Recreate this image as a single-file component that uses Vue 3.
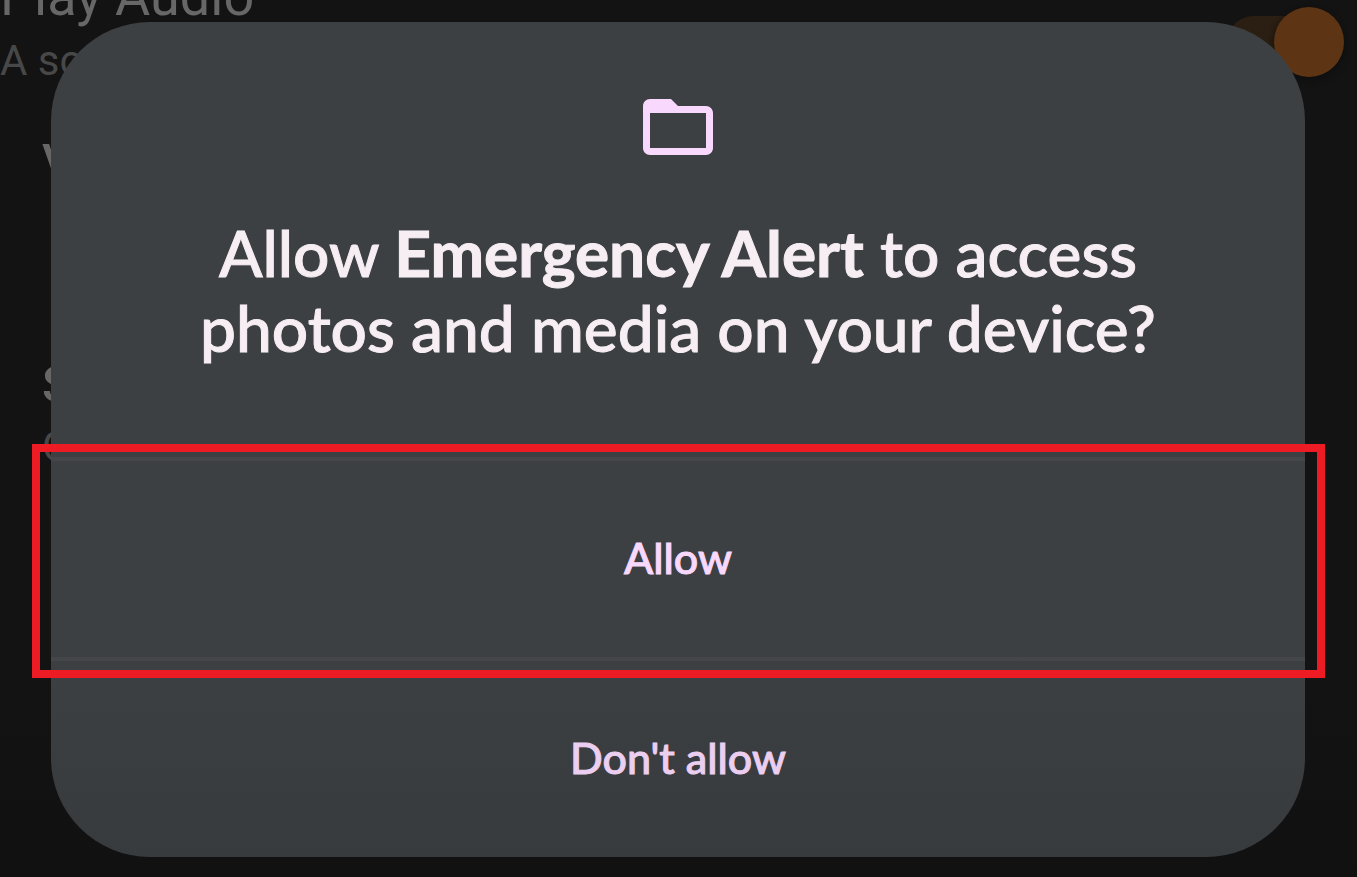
<script setup>
import { ref } from 'vue'

const playAudio = ref(true)
const emit = defineEmits(['allow', 'deny'])
</script>

<template>
  <div class="screen">
    <div class="settings">
      <div class="setting">
        <label class="setting-text" for="play-audio">
          <span class="title">Play Audio</span>
          <span class="summary">A so</span>
        </label>
        <input id="play-audio" v-model="playAudio" class="switch" type="checkbox" role="switch">
      </div>
      <div class="setting inset volume"><span class="name">V</span></div>
      <div class="setting inset sound">
        <span class="name">S</span>
        <span class="summary">C</span>
      </div>
    </div>

    <main class="dialog" role="dialog" aria-labelledby="dialog-title">
      <header class="prompt">
        <svg class="folder" viewBox="0 0 24 24" aria-hidden="true">
          <path d="M20 6h-8l-2-2H4c-1.1 0-1.99.9-1.99 2L2 18c0 1.1.9 2 2 2h16c1.1 0 2-.9 2-2V8c0-1.1-.9-2-2-2zm0 12H4V8h16v10z" />
        </svg>
        <h1 id="dialog-title">Allow <b>Emergency Alert</b> to access<br>photos and media on your device?</h1>
      </header>
      <div class="choice highlighted">
        <button type="button" @click="emit('allow')">Allow</button>
      </div>
      <div class="choice deny">
        <button type="button" @click="emit('deny')">Don't allow</button>
      </div>
    </main>
  </div>
</template>

<style>
body {
  margin: 0;
  background: #131313;
}
</style>

<style scoped>
.screen {
  box-sizing: border-box;
  display: grid;
  min-height: 100vh;
  overflow: hidden;
  background: linear-gradient(#131313 75%, #111);
}

.settings,
.dialog {
  grid-area: 1 / 1;
}

.settings {
  height: 0;
  font-family: Roboto, sans-serif;
  color: #676767;
}

.setting {
  display: flex;
  justify-content: space-between;
  align-items: flex-start;
}

.setting-text {
  display: flex;
  flex-direction: column;
  margin-top: -35px;
}

.title {
  font-size: 54px;
  line-height: 64px;
}

.summary {
  font-size: 42px;
  line-height: 64px;
  color: #484848;
}

.switch {
  appearance: none;
  flex: none;
  width: 112px;
  height: 50px;
  margin: 16px 17px 0 0;
  border-radius: 25px;
  background: #2b1e12;
}

.switch::before {
  content: "";
  display: block;
  width: 70px;
  height: 70px;
  margin: -9px 0 0 46px;
  border-radius: 50%;
  background: #5e3514;
  box-shadow: 0 3px 6px #0e0e0e;
}

.inset {
  flex-direction: column;
  padding-left: 42px;
}

.name {
  font-size: 50px;
  font-weight: 500;
  line-height: 60px;
}

.volume {
  padding-top: 40px;
}

.sound {
  padding-top: 162px;
}

.dialog {
  position: relative;
  align-self: start;
  margin: 22px 52px 20px 51px;
  border-radius: 99px;
  background: linear-gradient(#3c4043 75%, #383b3e);
  font-family: Lato, sans-serif;
}

.prompt {
  display: flex;
  flex-direction: column;
  align-items: center;
  padding: 63px 24px 92px;
}

.folder {
  width: 84px;
  height: 84px;
  fill: #f9d8fd;
}

h1 {
  margin: 46px 0 0;
  color: #f7eef4;
  font-size: 64px;
  font-weight: 500;
  line-height: 75px;
  text-align: center;
  -webkit-text-stroke: 1px currentColor;
}

h1 b {
  font-weight: 700;
}

.choice {
  position: relative;
  border-top: 4px solid #454649;
}

.choice button {
  display: block;
  width: 100%;
  height: 196px;
  padding: 0 0 2px;
  border: 0;
  background: none;
  color: #f9d8fd;
  font: 500 43px/52px Lato, sans-serif;
  -webkit-text-stroke: 1px currentColor;
  cursor: pointer;
}

.choice.deny button {
  border-radius: 0 0 99px 99px;
  color: #eccff0;
}

.highlighted::after {
  content: "";
  position: absolute;
  z-index: 1;
  inset: -17px -20px -21px -19px;
  border: 8px solid #ed1c24;
  pointer-events: none;
}
</style>
